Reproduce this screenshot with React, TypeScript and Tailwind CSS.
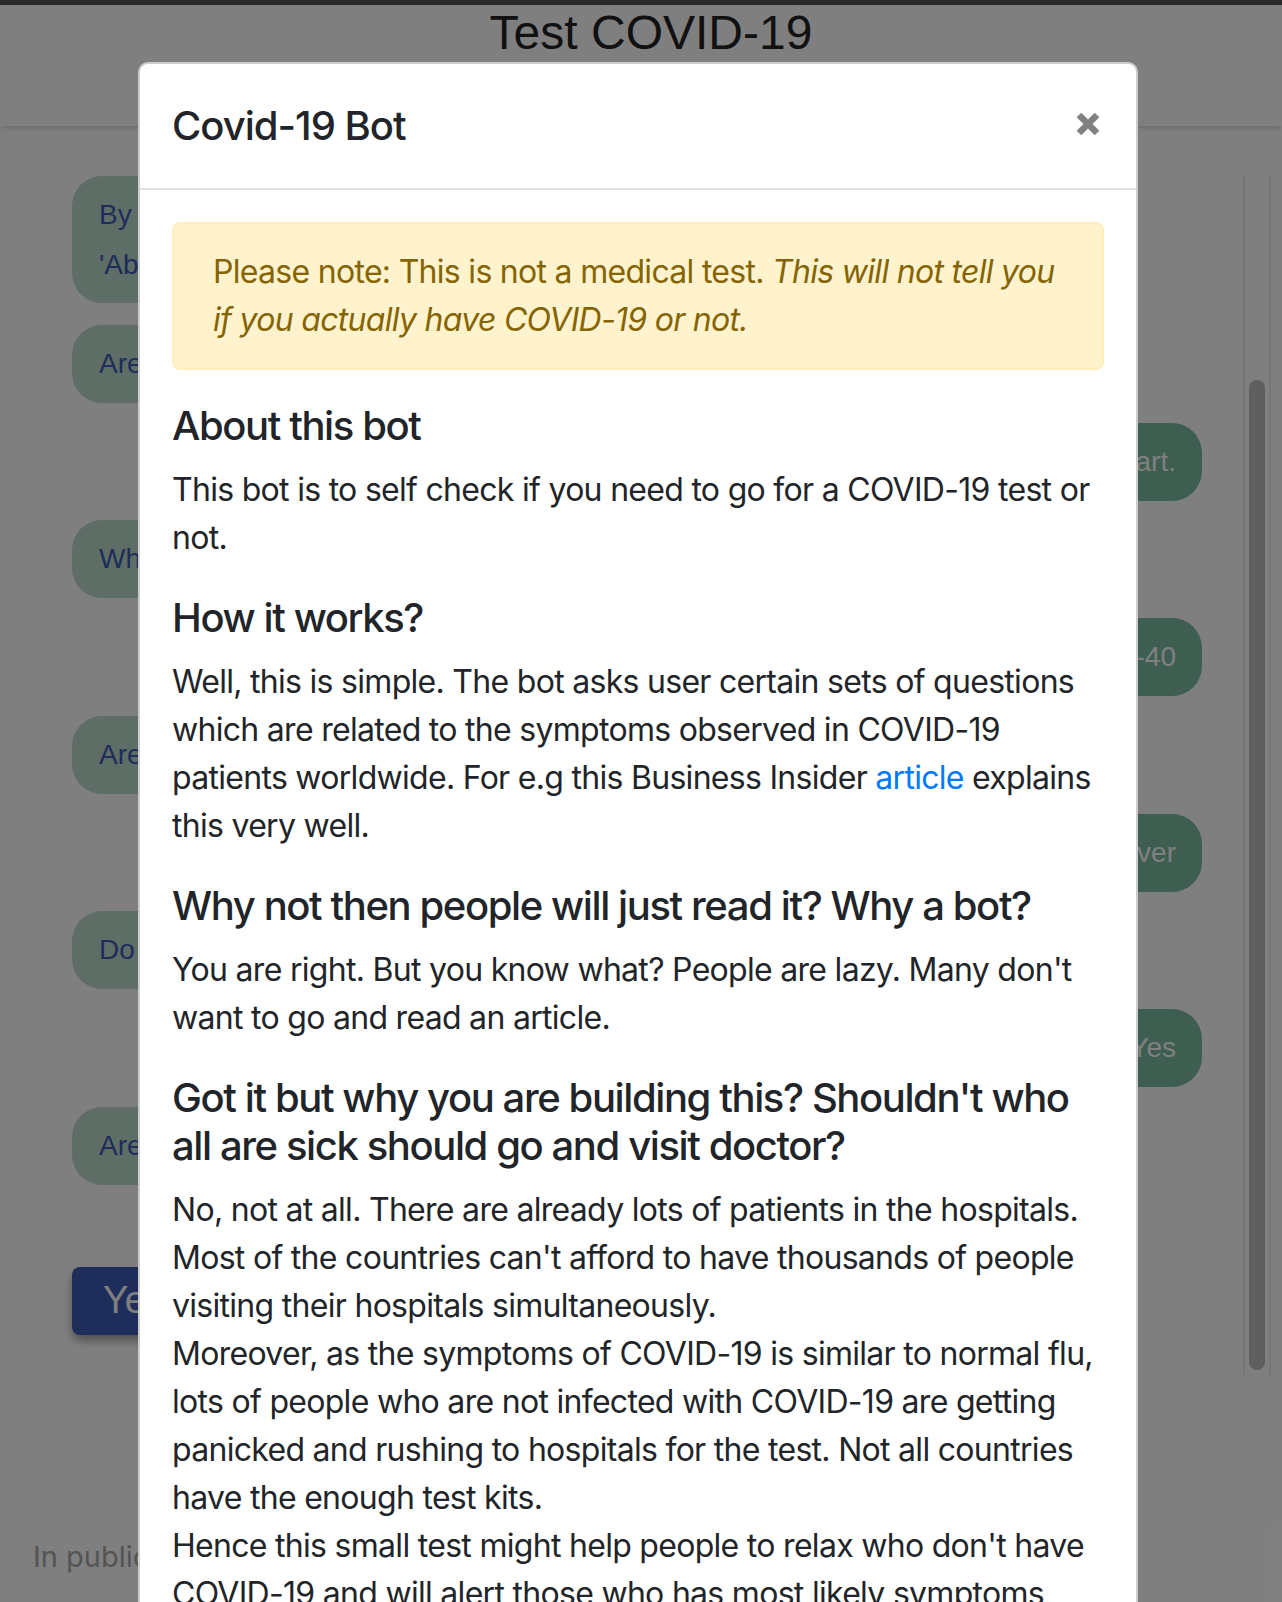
import React from 'react';

type Msg = { from: 'bot' | 'user'; lines: string[] };

const messages: Msg[] = [
  { from: 'bot', lines: ['By continuing you agree to the terms in the', "'About' section. Type 'start' to begin."] },
  { from: 'bot', lines: ['Are you ready to answer a few questions?'] },
  { from: 'user', lines: ["Okay, let's start."] },
  { from: 'bot', lines: ['What is your age group?'] },
  { from: 'user', lines: ['20-40'] },
  { from: 'bot', lines: ['Are you having any of these symptoms?'] },
  { from: 'user', lines: ['Fever'] },
  { from: 'bot', lines: ['Do you have a dry cough?'] },
  { from: 'user', lines: ['Yes'] },
  { from: 'bot', lines: ['Are you having difficulty in breathing?'] },
];

const ChatBubble: React.FC<{ msg: Msg; first?: boolean }> = ({ msg, first }) => {
  if (msg.from === 'user') {
    return (
      <div className="flex justify-end">
        <div className="h-[78px] flex items-center rounded-[30px] bg-[#7abca0] pl-[28px] pr-[26px] text-[28px] text-white whitespace-nowrap">
          {msg.lines[0]}
        </div>
      </div>
    );
  }
  return (
    <div className="flex justify-start">
      <div
        className={
          'rounded-[30px] bg-[#bcdccc] px-[27px] text-[28px] leading-[50px] text-[#3e5ab4] whitespace-nowrap ' +
          (first ? 'py-[13.5px] mb-[2px]' : 'h-[78px] flex items-center')
        }
      >
        {msg.lines.map((l, i) => (
          <div key={i}>{l}</div>
        ))}
      </div>
    </div>
  );
};

const ChatPage: React.FC = () => (
  <div className="absolute inset-0 bg-white font-[family-name:'Liberation_Sans',Arial,sans-serif]">
    <div className="h-[5px] bg-[#555555]" />
    <header className="h-[121px] shadow-md relative">
      <h1 className="pl-[20px] text-center text-[48px] leading-[56px] text-[#222222]">
        Test COVID-19
      </h1>
    </header>

    <div className="relative pt-[50px] pl-[72px] pr-[80px]">
      <div className="flex flex-col gap-[19.75px]">
        {messages.map((m, i) => (
          <ChatBubble key={i} msg={m} first={i === 0} />
        ))}
      </div>

      <div className="mt-[82px] flex gap-[24px]">
        <button className="h-[68px] rounded-[8px] bg-[#3e5ab4] px-[31px] text-[38px] text-white shadow-[0_6px_10px_rgba(0,0,0,0.35)]">
          Yes
        </button>
        <button className="h-[68px] rounded-[8px] bg-[#3e5ab4] px-[31px] text-[38px] text-white shadow-[0_6px_10px_rgba(0,0,0,0.35)]">
          No
        </button>
      </div>

      <p className="mt-[200px] -ml-[39px] font-[family-name:Inter,sans-serif] text-[29px] leading-[44px] text-[#a8a8a8]">
        In public interest. Stay home, stay safe.
      </p>

      {/* custom scroll track */}
      <div className="absolute left-[1243px] top-[50px] h-[1199px] w-[28px] border-x-2 border-[#ececec]">
        <div className="mx-auto mt-[204px] h-[990px] w-[16px] rounded-full bg-[#bebebe]" />
      </div>
    </div>
  </div>
);

const headingCls = 'mb-[16px] text-[40px] font-medium leading-[48px] tracking-[-0.035em]';

const InfoModal: React.FC = () => (
  <div className="absolute left-[138px] top-[62px] w-[1000px] rounded-[10px] border-2 border-black/20 bg-white text-[#212529] font-[family-name:Inter,sans-serif]">
    <div className="flex items-start justify-between border-b-2 border-[#dee2e6] p-[32px]">
      <h5 className="text-[40px] font-medium leading-[60px] tracking-[-0.025em]">Covid-19 Bot</h5>
      <button className="mt-[16px] mr-[4px]" aria-label="Close">
        <svg width="24" height="24" viewBox="0 0 24 24">
          <path d="M3 3 L21 21 M21 3 L3 21" stroke="#808080" strokeWidth="6.5" strokeLinecap="butt" />
        </svg>
      </button>
    </div>

    <div className="p-[32px] text-[32px] leading-[48px] tracking-[-0.022em]">
      <div className="mb-[32px] rounded-[8px] border-2 border-[#ffeeba] bg-[#fff3cd] px-[39px] py-[24px] text-[#856404]">
        Please note: This is not a medical test.{' '}
        <i>This will not tell you if you actually have COVID-19 or not.</i>
      </div>

      <h5 className={headingCls}>About this bot</h5>
      <p className="mb-[32px]">This bot is to self check if you need to go for a COVID-19 test or not.</p>

      <h5 className={headingCls}>How it works?</h5>
      <p className="mb-[32px]">
        Well, this is simple. The bot asks user certain sets of questions which are related to the symptoms
        observed in COVID-19 patients worldwide. For e.g this Business Insider{' '}
        <a href="#" className="text-[#007bff]">article</a> explains this very well.
      </p>

      <h5 className={headingCls}>Why not then people will just read it? Why a bot?</h5>
      <p className="mb-[32px]">
        You are right. But you know what? People are lazy. Many don't want to go and read an article.
      </p>

      <h5 className={headingCls}>
        Got it but why you are building this? Shouldn't who all are sick should go and visit doctor?
      </h5>
      <p className="mb-[32px]">
        No, not at all. There are already lots of patients in the hospitals. Most of the countries can't afford
        to have thousands of people visiting their hospitals simultaneously.
        <br />
        Moreover, as the symptoms of COVID-19 is similar to normal flu, lots of people who are not infected with
        COVID-19 are getting panicked and rushing to hospitals for the test. Not all countries have the enough
        test kits.
        <br />
        Hence this small test might help people to relax who don't have COVID-19 and will alert those who has
        most likely symptoms associated with COVID-19.
      </p>
    </div>
  </div>
);

export default function App() {
  return (
    <div className="relative h-[1602px] w-[1282px] overflow-hidden font-[family-name:Inter,sans-serif]">
      <ChatPage />
      <div className="absolute inset-0 bg-black/50" />
      <InfoModal />
    </div>
  );
}
